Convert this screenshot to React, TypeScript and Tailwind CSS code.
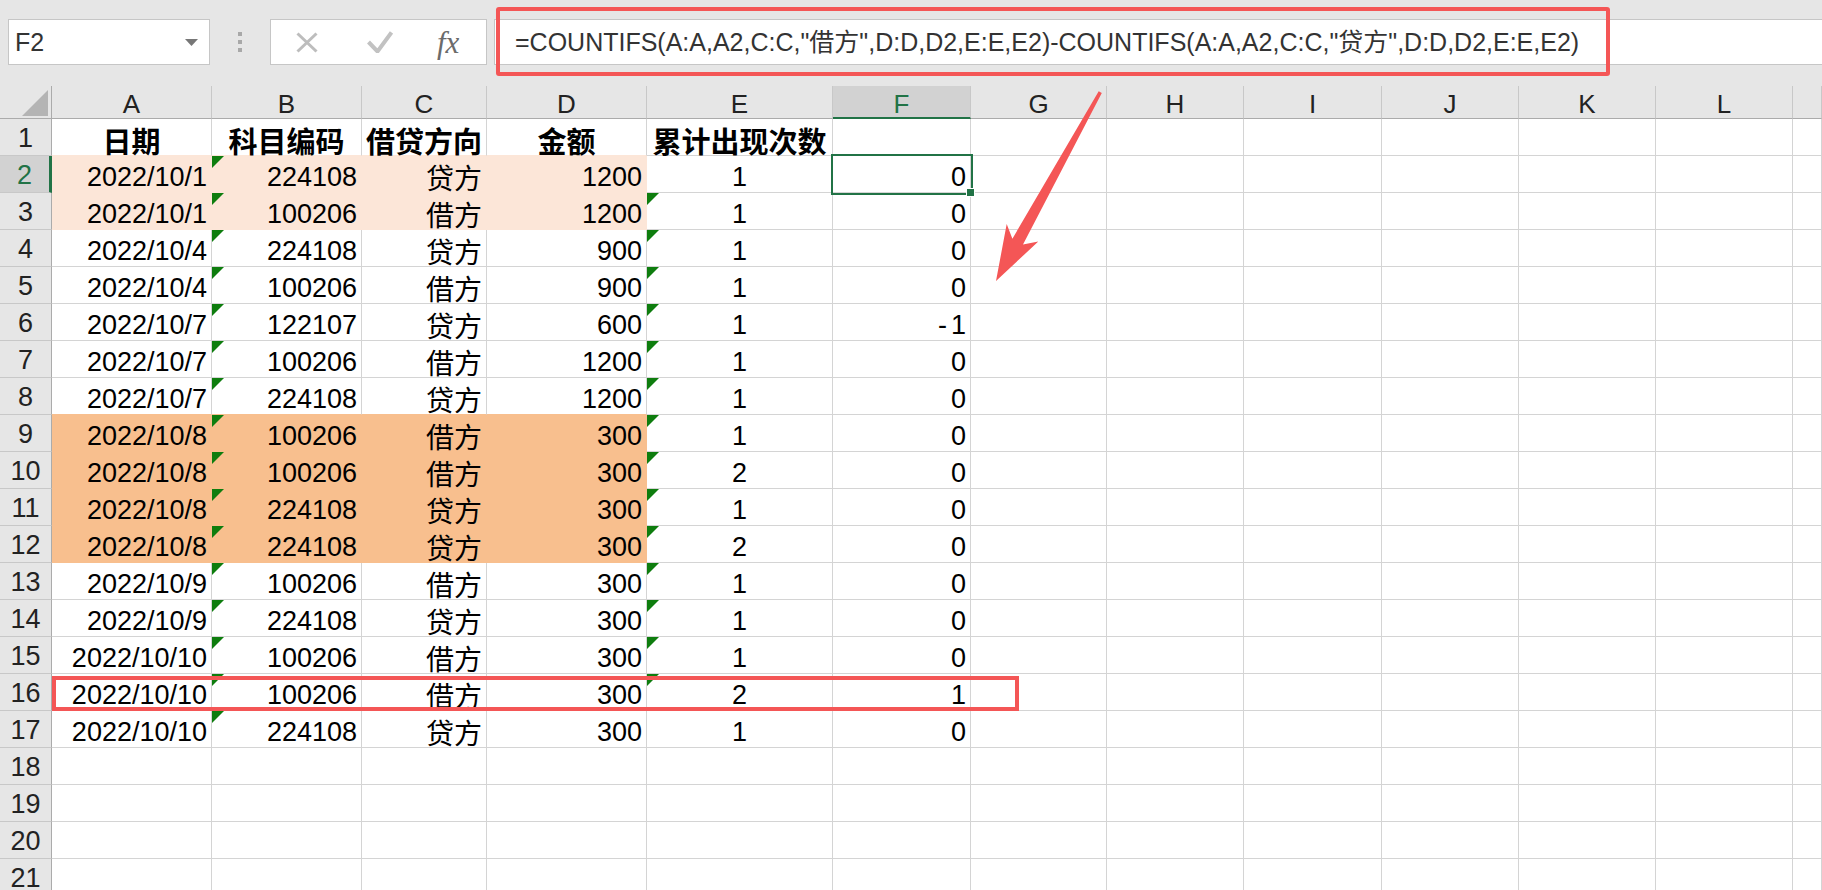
import React from 'react';

type Fill = 'none' | 'peach' | 'orange';

const GRID =
  'grid grid-cols-[52px_160px_150px_125px_160px_186px_138px_136px_137px_138px_137px_137px_137px_1fr]';

const COLS = ['A', 'B', 'C', 'D', 'E', 'F', 'G', 'H', 'I', 'J', 'K', 'L', ''];

const HEADER = ['日期', '科目编码', '借贷方向', '金额', '累计出现次数', ''];

const DATA: { v: string[]; fill: Fill }[] = [
  { v: ['2022/10/1', '224108', '贷方', '1200', '1', '0'], fill: 'peach' },
  { v: ['2022/10/1', '100206', '借方', '1200', '1', '0'], fill: 'peach' },
  { v: ['2022/10/4', '224108', '贷方', '900', '1', '0'], fill: 'none' },
  { v: ['2022/10/4', '100206', '借方', '900', '1', '0'], fill: 'none' },
  { v: ['2022/10/7', '122107', '贷方', '600', '1', '-1'], fill: 'none' },
  { v: ['2022/10/7', '100206', '借方', '1200', '1', '0'], fill: 'none' },
  { v: ['2022/10/7', '224108', '贷方', '1200', '1', '0'], fill: 'none' },
  { v: ['2022/10/8', '100206', '借方', '300', '1', '0'], fill: 'orange' },
  { v: ['2022/10/8', '100206', '借方', '300', '2', '0'], fill: 'orange' },
  { v: ['2022/10/8', '224108', '贷方', '300', '1', '0'], fill: 'orange' },
  { v: ['2022/10/8', '224108', '贷方', '300', '2', '0'], fill: 'orange' },
  { v: ['2022/10/9', '100206', '借方', '300', '1', '0'], fill: 'none' },
  { v: ['2022/10/9', '224108', '贷方', '300', '1', '0'], fill: 'none' },
  { v: ['2022/10/10', '100206', '借方', '300', '1', '0'], fill: 'none' },
  { v: ['2022/10/10', '100206', '借方', '300', '2', '1'], fill: 'none' },
  { v: ['2022/10/10', '224108', '贷方', '300', '1', '0'], fill: 'none' },
];

const BG: Record<Fill, string> = {
  none: 'bg-white',
  peach: 'bg-[#fce6d8]',
  orange: 'bg-[#f8bf8e]',
};
const BB: Record<Fill, string> = {
  none: 'border-b-[#d4d4d4]',
  peach: 'border-b-[#fce6d8]',
  orange: 'border-b-[#f8bf8e]',
};
const BR: Record<Fill, string> = {
  none: 'border-r-[#d4d4d4]',
  peach: 'border-r-[#fce6d8]',
  orange: 'border-r-[#f8bf8e]',
};

const isCJK = (s: string) => /[\u4e00-\u9fff]/.test(s);

function rowFill(r: number): Fill {
  if (r >= 2 && r <= 17) return DATA[r - 2].fill;
  return 'none';
}

function Cell({ r, c }: { r: number; c: number }) {
  const inFillCols = c >= 1 && c <= 4;
  const own: Fill = inFillCols ? rowFill(r) : 'none';
  const next: Fill = inFillCols ? rowFill(r + 1) : 'none';
  const bottom: Fill = own !== 'none' ? own : next;
  let text = '';
  let bold = false;
  if (r === 1 && c <= 6) {
    text = HEADER[c - 1];
    bold = true;
  } else if (r >= 2 && r <= 17 && c <= 6) {
    text = DATA[r - 2].v[c - 1];
  }
  const center = r === 1 || c === 5;
  const triB = c === 2 && r >= 2 && r <= 17;
  const triE = c === 5 && r >= 3 && r <= 16;
  return (
    <div
      className={`relative flex h-[37px] items-center border-b border-r pt-[6px] leading-none ${BG[own]} ${BB[bottom]} ${BR[own]} ${
        center ? 'justify-center' : 'justify-end pr-[4px]'
      }`}
    >
      {(triB || triE) && (
        <span className="absolute left-0 top-0 h-0 w-0 border-r-[12px] border-t-[12px] border-r-transparent border-t-[#0e7d0e]" />
      )}
      {text &&
        (bold ? (
          <span className="whitespace-nowrap font-['Noto_Sans_CJK_SC',sans-serif] text-[29px] font-bold leading-none">
            {text}
          </span>
        ) : isCJK(text) ? (
          <span className="whitespace-nowrap font-['Noto_Sans_CJK_SC',sans-serif] text-[28px] leading-none">
            {text}
          </span>
        ) : text === '-1' ? (
          <span className="whitespace-nowrap text-[27px] leading-none">
            <span className="mr-[4px]">-</span>1
          </span>
        ) : (
          <span className="whitespace-nowrap text-[27px] leading-none">{text}</span>
        ))}
    </div>
  );
}

function RowHeader({ r }: { r: number }) {
  const sel = r === 2;
  return (
    <div
      className={`flex h-[37px] items-center justify-center border-b border-b-[#c8c8c8] pt-[3px] text-[27px] leading-none ${
        sel
          ? 'border-r-[3px] border-r-[#217346] bg-[#d2d2d2] text-[#217346]'
          : 'border-r border-r-[#ababab] bg-[#e6e6e6] text-[#222]'
      }`}
    >
      {r}
    </div>
  );
}

const FORMULA =
  '=COUNTIFS(A:A,A2,C:C,"借方",D:D,D2,E:E,E2)-COUNTIFS(A:A,A2,C:C,"贷方",D:D,D2,E:E,E2)';

export default function App() {
  const rows = Array.from({ length: 21 }, (_, i) => i + 1);
  return (
    <div className="relative h-[890px] w-[1822px] overflow-hidden bg-white font-['Liberation_Sans','Noto_Sans_CJK_SC',sans-serif] text-black">
      {/* Formula bar */}
      <div className="flex h-[86px] items-start bg-[#e6e6e6] pt-[19px]">
        <div className="ml-[8px] flex h-[46px] w-[202px] items-center justify-between border border-[#c6c6c6] bg-white pl-[6px] pr-[11px]">
          <span className="text-[25px] leading-none text-[#333]">F2</span>
          <svg width="13" height="7" viewBox="0 0 13 7">
            <path d="M0 0h13L6.5 7z" fill="#777" />
          </svg>
        </div>
        <div className="ml-[28px] mt-[13px] flex flex-col gap-[4px]">
          <span className="h-[4px] w-[4px] bg-[#a8a8a8]" />
          <span className="h-[4px] w-[4px] bg-[#a8a8a8]" />
          <span className="h-[4px] w-[4px] bg-[#a8a8a8]" />
        </div>
        <div className="ml-[28px] flex h-[46px] w-[217px] items-center border border-[#c6c6c6] bg-white">
          <svg className="ml-[25px]" width="22" height="21" viewBox="0 0 22 21">
            <path d="M1.5 1.5l19 18M20.5 1.5l-19 18" stroke="#bdbdbd" strokeWidth="3" fill="none" />
          </svg>
          <svg className="ml-[49px]" width="26" height="22" viewBox="0 0 26 22">
            <path d="M1.5 11l9 9.5L24.5 1.5" stroke="#c2c2c2" strokeWidth="4" fill="none" />
          </svg>
          <span className="ml-[44px] font-['Liberation_Serif',serif] text-[31px] italic leading-none text-[#6b6b6b]">
            fx
          </span>
        </div>
        <div className="ml-[7px] flex h-[46px] flex-1 items-center border-y border-l border-[#c6c6c6] bg-white pl-[20px]">
          <span className="whitespace-nowrap text-[25px] leading-none text-[#333]">{FORMULA}</span>
        </div>
      </div>

      {/* Column headers */}
      <div className={GRID}>
        <div className="relative h-[33px] border-b border-r border-b-[#ababab] border-r-[#ababab] bg-[#e6e6e6]">
          <svg className="absolute left-0 top-0" width="52" height="33" viewBox="0 0 52 33">
            <path d="M48 4V30H22z" fill="#b4b4b4" />
          </svg>
        </div>
        {COLS.map((c) =>
          c === 'F' ? (
            <div
              key={c}
              className="flex h-[33px] items-center justify-center border-b-2 border-r border-b-[#217346] border-r-[#c8c8c8] bg-[#d2d2d2] pt-[4px] text-[26px] leading-none text-[#217346]"
            >
              {c}
            </div>
          ) : (
            <div
              key={c || 'M'}
              className="flex h-[33px] items-center justify-center border-b border-r border-b-[#ababab] border-r-[#c8c8c8] bg-[#e6e6e6] pt-[4px] text-[26px] leading-none text-[#222]"
            >
              {c}
            </div>
          )
        )}
      </div>

      {/* Rows */}
      <div className={GRID}>
        {rows.map((r) => (
          <React.Fragment key={r}>
            <RowHeader r={r} />
            {COLS.map((_, i) => (
              <Cell key={i} r={r} c={i + 1} />
            ))}
          </React.Fragment>
        ))}
      </div>

      {/* Selection F2 */}
      <div className="pointer-events-none absolute left-[831px] top-[154px] h-[41px] w-[142px] border-2 border-[#217346]" />
      <div className="pointer-events-none absolute left-[966px] top-[188px] h-[9px] w-[9px] border border-white bg-[#217346]" />

      {/* Annotations */}
      <div className="pointer-events-none absolute left-[496px] top-[7px] h-[69px] w-[1114px] rounded-[3px] border-4 border-[#f45656]" />
      <div className="pointer-events-none absolute left-[52px] top-[676px] h-[35px] w-[967px] border-4 border-[#f45656]" />
      <svg className="pointer-events-none absolute left-0 top-0" width="1822" height="890" viewBox="0 0 1822 890">
        <polygon
          points="1098.7,91.3 1101.8,93 1023,244.5 1038.3,241.5 996,281 1006.7,224.1 1012.4,238.7"
          fill="#f45656"
        />
      </svg>
    </div>
  );
}
